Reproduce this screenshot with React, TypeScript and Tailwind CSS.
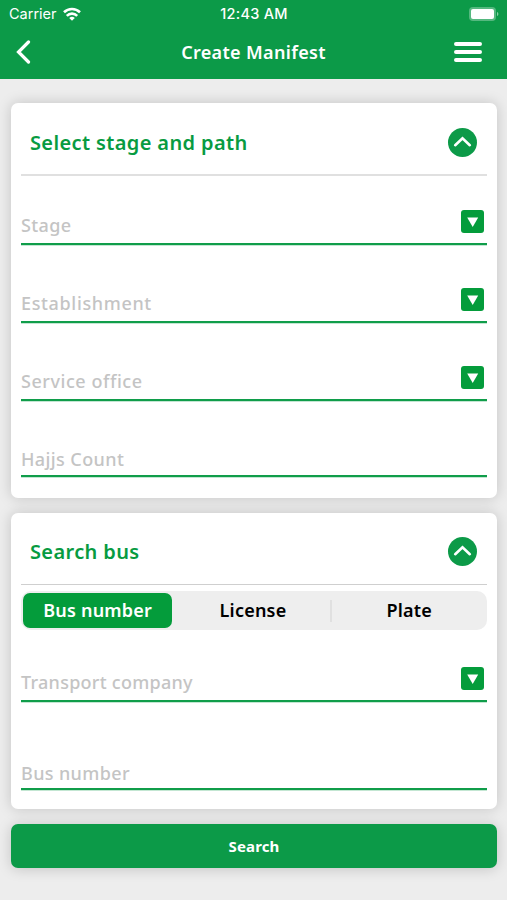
import React from "react";

const textFont = "font-['Noto_Sans','Open_Sans',sans-serif]";

function WifiIcon() {
  return (
    <svg width="18" height="14" viewBox="0 0 18 14" fill="none" stroke="white" strokeWidth="2.6">
      <path d="M1 5.2a11.6 11.6 0 0 1 16 0" />
      <path d="M3.800 8.800a7.400 7.400 0 0 1 10.400 0" />
      <path d="M9 13.800 6.200 11a4.200 4.200 0 0 1 5.600 0Z" fill="white" stroke="none" />
    </svg>
  );
}

function BatteryIcon() {
  return (
    <svg width="30" height="14" viewBox="0 0 30 14">
      <rect x="0" y="0" width="27" height="14" rx="4" fill="white" fillOpacity="0.3" />
      <rect x="2" y="2" width="23" height="10" rx="2" fill="white" />
      <path d="M28 5v4c1.800-.5 1.800-3.500 0-4Z" fill="white" fillOpacity="0.5" />
    </svg>
  );
}

function CardHeader({ title, size }: { title: string; size: string }) {
  return (
    <div className={`flex items-center justify-between pl-[9px] pr-[10px] ${size}`}>
      <h2 className="text-[20px] leading-[28px] font-semibold tracking-[0.37px] text-[#079b41] whitespace-nowrap">{title}</h2>
      <svg width="29" height="29" viewBox="0 0 29 29">
        <circle cx="14.500" cy="14.500" r="14.500" fill="#0c9a48" />
        <path d="m7.200 17.200 7.300-7 7.300 7" fill="none" stroke="white" strokeWidth="2.600" strokeLinecap="round" />
      </svg>
    </div>
  );
}

function Field({ label, size, select = true }: { label: string; size: string; select?: boolean }) {
  return (
    <div className={`flex items-end justify-between border-b-2 border-[#109d4a] shadow-[0_1px_0_rgba(16,157,74,0.25)] ${size}`}>
      <span className="text-[18px] leading-[24px] font-medium text-[#c4c4c4] whitespace-nowrap">{label}</span>
      {select && (
        <svg className="mr-[3px] mb-[10px]" width="23" height="23" viewBox="0 0 23 23">
          <rect width="23" height="23" rx="3" fill="#049c3b" />
          <path d="M6.200 7.500h11L11.700 17Z" fill="white" />
        </svg>
      )}
    </div>
  );
}

export default function App() {
  return (
    <div className={`flex h-[900px] w-[507px] flex-col bg-[#ededed] ${textFont}`}>
      <header className="flex h-[79px] flex-col bg-[#0c9a48] text-white">
        <div className="grid h-[27px] grid-cols-3 items-center pl-[9px] pr-[8px] font-['Inter',sans-serif]">
          <div className="flex items-center gap-[6px]">
            <span className="text-[14.500px]">Carrier</span>
            <WifiIcon />
          </div>
          <span className="text-center text-[14.500px] font-medium tracking-[0.25px] whitespace-nowrap">12:43 AM</span>
          <div className="flex justify-end"><BatteryIcon /></div>
        </div>
        <div className="grid h-[50px] grid-cols-[1fr_auto_1fr] items-center pl-[16px] pr-[16px]">
          <svg width="16" height="24" viewBox="0 0 16 24" fill="none" stroke="white" strokeWidth="3.200" strokeLinecap="round">
            <path d="M12.500 2 2.500 12l10 10" />
          </svg>
          <h1 className="pt-px text-[18px] font-semibold tracking-[0.33px] whitespace-nowrap">Create Manifest</h1>
          <svg className="mr-[9px] justify-self-end" width="28" height="20" viewBox="0 0 28 20" stroke="white" strokeWidth="4" strokeLinecap="round">
            <path d="M2 2h24M2 10h24M2 18h24" />
          </svg>
        </div>
      </header>
      <main className="flex flex-col pt-[24px] pr-[10px] pl-[11px]">
        <section className="h-[395px] rounded-[7px] bg-white px-[10px] shadow-[0_0_14px_rgba(0,0,0,0.18)]">
          <CardHeader title="Select stage and path" size="h-[73px] border-b-2 border-[#e0e0e0] pt-[8px]" />
          <Field label="Stage" size="h-[69px] tracking-[0.4px] [&>span]:pb-[6px]" />
          <Field label="Establishment" size="h-[78px] tracking-[0.65px] [&>span]:pb-[6px]" />
          <Field label="Service office" size="h-[78px] tracking-[0.55px] [&>span]:pb-[6px]" />
          <Field label="Hajjs Count" size="h-[76px] tracking-[0.4px] [&>span]:pb-[4px]" select={false} />
        </section>
        <section className="mt-[15px] h-[296px] rounded-[7px] bg-white px-[10px] shadow-[0_0_14px_rgba(0,0,0,0.18)]">
          <CardHeader title="Search bus" size="h-[72px] border-b border-[#cfcfcf] pt-[6px]" />
          <div className="mt-[6px] grid h-[39px] grid-cols-3 items-center rounded-[10px] bg-[#eeeeee] text-center text-[18px] font-semibold tracking-[0.2px] text-black">
            <div className="ml-[2px] mr-[4px] flex h-[35px] items-center justify-center rounded-[7px] bg-[#049c3b] text-white">
              Bus number
            </div>
            <div className="h-[22px] border-r-2 border-[#e0e0e0] leading-[20px]">License</div>
            <div className="h-[22px] leading-[20px]">Plate</div>
          </div>
          <Field label="Transport company" size="h-[72px] tracking-[0.27px] [&>span]:pb-[6px]" />
          <Field label="Bus number" size="h-[88px] tracking-[0.37px] [&>span]:pb-[3px]" select={false} />
        </section>
        <button className="mt-[15px] h-[44px] rounded-[7px] bg-[#0c9a48] text-[15px] font-bold tracking-[0.15px] text-white shadow-[0_1px_14px_rgba(0,0,0,0.18)]">
          Search
        </button>
      </main>
    </div>
  );
}
